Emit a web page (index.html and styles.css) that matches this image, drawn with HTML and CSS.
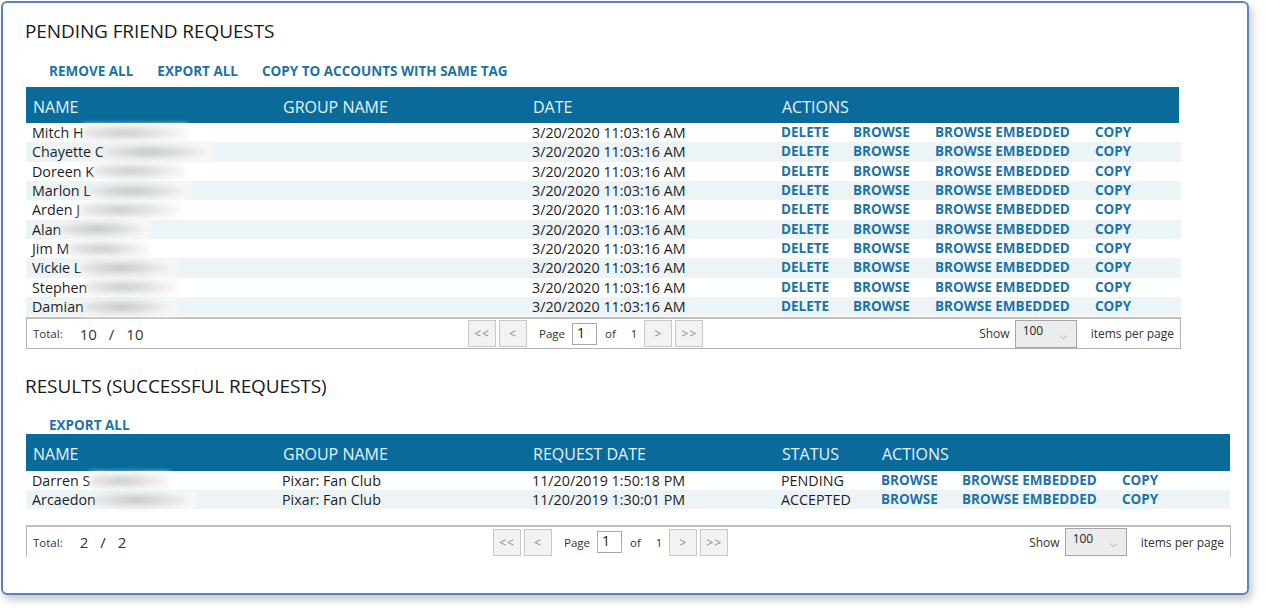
FILE: index.html
```html
<!DOCTYPE html>
<html>
<head>
<meta charset="utf-8">
<link rel="stylesheet" href="styles.css">
</head>
<body>
<div class="frame">
  <section class="section s1">
    <h2 class="title">PENDING FRIEND REQUESTS</h2>
    <div class="toplinks">
      <a class="lnk">REMOVE ALL</a>
      <a class="lnk">EXPORT ALL</a>
      <a class="lnk">COPY TO ACCOUNTS WITH SAME TAG</a>
    </div>
    <div class="grid g1">
      <div class="hrow"><div>NAME</div><div>GROUP NAME</div><div>DATE</div><div>ACTIONS</div></div>
      <div class="row"><div>Mitch H<span class="blur bw1"></span></div><div></div><div>3/20/2020 11:03:16 AM</div><div class="acts"><a class="lnk a-del">DELETE</a><a class="lnk a-br">BROWSE</a><a class="lnk a-be">BROWSE EMBEDDED</a><a class="lnk">COPY</a></div></div>
      <div class="row alt"><div>Chayette C<span class="blur bw2"></span></div><div></div><div>3/20/2020 11:03:16 AM</div><div class="acts"><a class="lnk a-del">DELETE</a><a class="lnk a-br">BROWSE</a><a class="lnk a-be">BROWSE EMBEDDED</a><a class="lnk">COPY</a></div></div>
      <div class="row"><div>Doreen K<span class="blur bw3"></span></div><div></div><div>3/20/2020 11:03:16 AM</div><div class="acts"><a class="lnk a-del">DELETE</a><a class="lnk a-br">BROWSE</a><a class="lnk a-be">BROWSE EMBEDDED</a><a class="lnk">COPY</a></div></div>
      <div class="row alt"><div>Marlon L<span class="blur bw4"></span></div><div></div><div>3/20/2020 11:03:16 AM</div><div class="acts"><a class="lnk a-del">DELETE</a><a class="lnk a-br">BROWSE</a><a class="lnk a-be">BROWSE EMBEDDED</a><a class="lnk">COPY</a></div></div>
      <div class="row"><div>Arden J<span class="blur bw5"></span></div><div></div><div>3/20/2020 11:03:16 AM</div><div class="acts"><a class="lnk a-del">DELETE</a><a class="lnk a-br">BROWSE</a><a class="lnk a-be">BROWSE EMBEDDED</a><a class="lnk">COPY</a></div></div>
      <div class="row alt"><div>Alan <span class="blur bw6"></span></div><div></div><div>3/20/2020 11:03:16 AM</div><div class="acts"><a class="lnk a-del">DELETE</a><a class="lnk a-br">BROWSE</a><a class="lnk a-be">BROWSE EMBEDDED</a><a class="lnk">COPY</a></div></div>
      <div class="row"><div>Jim M<span class="blur bw7"></span></div><div></div><div>3/20/2020 11:03:16 AM</div><div class="acts"><a class="lnk a-del">DELETE</a><a class="lnk a-br">BROWSE</a><a class="lnk a-be">BROWSE EMBEDDED</a><a class="lnk">COPY</a></div></div>
      <div class="row alt"><div>Vickie L<span class="blur bw8"></span></div><div></div><div>3/20/2020 11:03:16 AM</div><div class="acts"><a class="lnk a-del">DELETE</a><a class="lnk a-br">BROWSE</a><a class="lnk a-be">BROWSE EMBEDDED</a><a class="lnk">COPY</a></div></div>
      <div class="row"><div>Stephen<span class="blur bw9"></span></div><div></div><div>3/20/2020 11:03:16 AM</div><div class="acts"><a class="lnk a-del">DELETE</a><a class="lnk a-br">BROWSE</a><a class="lnk a-be">BROWSE EMBEDDED</a><a class="lnk">COPY</a></div></div>
      <div class="row alt"><div>Damian <span class="blur bw10"></span></div><div></div><div>3/20/2020 11:03:16 AM</div><div class="acts"><a class="lnk a-del">DELETE</a><a class="lnk a-br">BROWSE</a><a class="lnk a-be">BROWSE EMBEDDED</a><a class="lnk">COPY</a></div></div>
    </div>
    <div class="pager p1">
      <div class="total"><span class="tl">Total:</span><span class="tn">10</span><span class="ts">/</span><span class="tn">10</span></div>
      <div class="nav">
        <span class="btn">&lt;&lt;</span><span class="btn">&lt;</span>
        <span class="pg">Page</span><span class="inp">1</span><span class="pg">of</span><span class="pg">1</span>
        <span class="btn">&gt;</span><span class="btn">&gt;&gt;</span>
      </div>
      <div class="size"><span class="sh">Show</span><span class="sel">100<span class="caret">&#x2335;</span></span><span class="ipp">items per page</span></div>
    </div>
  </section>

  <section class="section s2">
    <h2 class="title">RESULTS (SUCCESSFUL REQUESTS)</h2>
    <div class="toplinks">
      <a class="lnk">EXPORT ALL</a>
    </div>
    <div class="grid g2">
      <div class="hrow"><div>NAME</div><div>GROUP NAME</div><div>REQUEST DATE</div><div>STATUS</div><div>ACTIONS</div></div>
      <div class="row"><div>Darren S<span class="blur bw11"></span></div><div>Pixar: Fan Club</div><div>11/20/2019 1:50:18 PM</div><div>PENDING</div><div class="acts"><a class="lnk a-br">BROWSE</a><a class="lnk a-be">BROWSE EMBEDDED</a><a class="lnk">COPY</a></div></div>
      <div class="row alt"><div>Arcaedon <span class="blur bw12"></span></div><div>Pixar: Fan Club</div><div>11/20/2019 1:30:01 PM</div><div>ACCEPTED</div><div class="acts"><a class="lnk a-br">BROWSE</a><a class="lnk a-be">BROWSE EMBEDDED</a><a class="lnk">COPY</a></div></div>
    </div>
    <div class="pager p2">
      <div class="total"><span class="tl">Total:</span><span class="tn">2</span><span class="ts">/</span><span class="tn">2</span></div>
      <div class="nav">
        <span class="btn">&lt;&lt;</span><span class="btn">&lt;</span>
        <span class="pg">Page</span><span class="inp">1</span><span class="pg">of</span><span class="pg">1</span>
        <span class="btn">&gt;</span><span class="btn">&gt;&gt;</span>
      </div>
      <div class="size"><span class="sh">Show</span><span class="sel">100<span class="caret">&#x2335;</span></span><span class="ipp">items per page</span></div>
    </div>
  </section>
</div>
</body>
</html>
```

FILE: styles.css
```css
* { box-sizing: border-box; }
html, body { margin: 0; padding: 0; background: #ffffff; }
body {
  font-family: "Open Sans", "Noto Sans", "Liberation Sans", sans-serif;
  color: #222;
  width: 1265px;
  height: 611px;
  overflow: hidden;
}
.frame {
  margin: 1px 0 0 1px;
  width: 1248px;
  height: 594px;
  border: 2px solid #5a83c2;
  border-radius: 6px;
  box-shadow: 3px 5px 9px rgba(0,0,0,0.22);
  padding: 16px 0 0 22px;
  overflow: hidden;
}
.title {
  margin: 0;
  font-weight: 400;
  font-size: 19px;
  line-height: 24px;
  color: #1a1a1a;
  letter-spacing: -0.1px;
}
.toplinks {
  display: flex;
  gap: 24px;
  padding-left: 24px;
  margin-top: 18px;
  height: 20px;
  align-items: center;
}
.lnk {
  font-weight: 700;
  font-size: 13.5px;
  color: #1d72a6;
  white-space: nowrap;
}
.grid { margin-left: 1px; margin-top: 6px; }
.g1 { width: 1155px; }
.g2 { width: 1204px; margin-top: 0; }
.hrow, .row { display: grid; }
.g1 .hrow, .g1 .row { grid-template-columns: 250px 250px 249px 1fr; }
.g2 .hrow, .g2 .row { grid-template-columns: 250px 250px 249px 100px 1fr; }
.hrow {
  background: #0a6b9b;
  color: #e8f2f8;
  font-size: 16px;
  height: 36px;
  padding-top: 10px;
  line-height: 20px;
}
.g1 .hrow { margin-right: 2px; }
.g2 .hrow { height: 37px; }
.hrow > div { padding-left: 7px; }
.row {
  height: 19.33px;
  font-size: 14.3px;
  line-height: 19px;
  color: #1e1e1e;
}
.g2 .row { height: 19px; }
.row > div { padding-left: 6px; white-space: nowrap; display: flex; align-items: center; }
.row.alt { background: #ecf4f7; }
.acts .lnk { display: inline-block; }
.g1 .acts .a-del { width: 72px; }
.acts .a-br { width: 82px; }
.acts .a-be { width: 160px; }
.g2 .acts .a-br { width: 81px; }
.blur {
  display: inline-block;
  height: 18px;
  background: radial-gradient(ellipse at 40% 50%, rgba(165,165,165,0.6) 0%, rgba(215,215,215,0.65) 40%, rgba(250,250,250,0.95) 75%);
  filter: blur(2.5px);
}
.bw1 { width: 104px; }
.bw2 { width: 110px; }
.bw3 { width: 92px; }
.bw4 { width: 100px; }
.bw5 { width: 100px; }
.bw6 { width: 90px; }
.bw7 { width: 80px; }
.bw8 { width: 96px; }
.bw9 { width: 90px; }
.bw10 { width: 92px; }
.bw11 { width: 80px; }
.bw12 { width: 100px; }

.pager {
  display: grid;
  align-items: center;
  border: 1px solid #b2b2b2;
  border-top: 2px solid #c0c0c0;
  margin-left: 1px;
  height: 32px;
  font-size: 12px;
  color: #333;
}
.p1 { width: 1155px; margin-top: 1px; grid-template-columns: 441px 1fr auto; }
.p2 { width: 1205px; margin-top: 16px; border-bottom: none; grid-template-columns: 466px 1fr auto; }
.total { padding-left: 6px; display: flex; align-items: center; }
.tl { font-size: 11.5px; margin-right: 17px; }
.tn { font-size: 15px; }
.ts { font-size: 15px; margin: 0 12px; }
.nav { display: flex; align-items: center; }
.btn {
  width: 28px;
  height: 27px;
  border: 1px solid #c8c8c8;
  background: #f2f2f2;
  color: #8a8a8a;
  font-size: 12px;
  display: flex;
  align-items: center;
  justify-content: center;
  margin-right: 3px;
  letter-spacing: 1px;
}
.pg { margin: 0 7px 0 8px; font-size: 11.5px; }
.inp {
  width: 25px;
  height: 22px;
  border: 1px solid #a8a8a8;
  background: #fff;
  font-size: 14px;
  line-height: 18px;
  padding-left: 4px;
  color: #222;
}
.nav .pg:nth-of-type(3) { margin-left: 9px; }
.size { display: flex; align-items: center; padding-right: 6px; }
.sh { margin-right: 5px; }
.sel {
  width: 62px;
  height: 28px;
  border: 1px solid #a6a6a6;
  background: #ececec;
  font-size: 12px;
  padding: 2px 0 0 7px;
  position: relative;
  margin-right: 14px;
  line-height: 16px;
  color: #222;
}
.caret {
  position: absolute;
  right: 9px;
  top: 7px;
  font-size: 9px;
  color: #777;
}
.s2 { margin-top: 25px; }
.s2 .toplinks { margin-top: 18px; height: 18px; }
```
